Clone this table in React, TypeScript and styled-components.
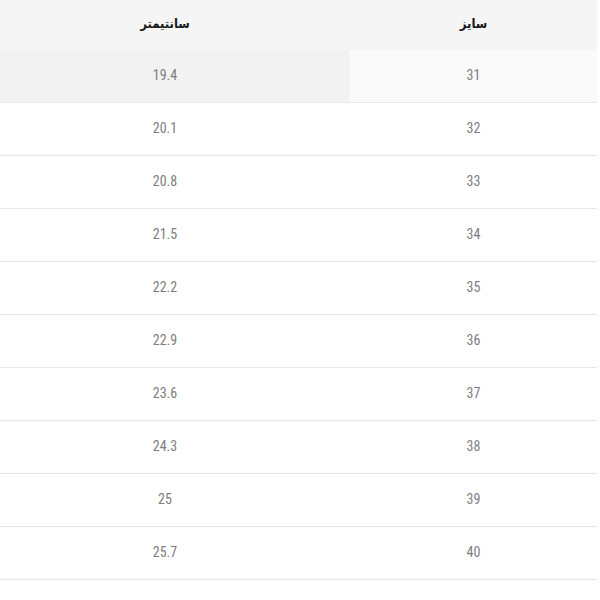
import React from "react";
import styled, { createGlobalStyle } from "styled-components";

const Global = createGlobalStyle`
  html, body { margin: 0; padding: 0; background: #ffffff; }
  body { width: 600px; height: 600px; overflow: hidden; }
`;

const Viewport = styled.div`
  width: 600px;
  height: 600px;
  overflow: hidden;
  background: #ffffff;
`;

const Table = styled.div`
  direction: rtl;
  width: 617px;
  margin-left: -20px;
  display: flex;
  flex-direction: column;
`;

const HeaderRow = styled.div`
  display: grid;
  grid-template-columns: 247px 1fr;
  height: 50px;
  background: #f5f5f5;
`;

const HeadCell = styled.div`
  display: flex;
  align-items: center;
  justify-content: center;
  font-family: "DejaVu Sans Condensed", "DejaVu Sans", sans-serif;
  font-weight: 700;
  font-size: 13px;
  color: #1a1a1a;
  padding-bottom: 3px;
`;

const Row = styled.div`
  display: grid;
  grid-template-columns: 247px 1fr;
  height: 52px;
  border-bottom: 1.5px solid #e6e6e6;
`;

const Cell = styled.div<{ $bg?: string }>`
  display: flex;
  align-items: center;
  justify-content: center;
  background: ${(p) => p.$bg || "transparent"};
  font-family: "Liberation Sans Narrow", "Roboto Condensed", Roboto, sans-serif;
  font-size: 14px;
  color: #7d7d7d;
  padding-bottom: 2px;
`;

const data: [string, string][] = [
  ["31", "19.4"],
  ["32", "20.1"],
  ["33", "20.8"],
  ["34", "21.5"],
  ["35", "22.2"],
  ["36", "22.9"],
  ["37", "23.6"],
  ["38", "24.3"],
  ["39", "25"],
  ["40", "25.7"],
];

export default function App() {
  return (
    <Viewport>
      <Global />
      <Table>
        <HeaderRow>
          <HeadCell>سایز</HeadCell>
          <HeadCell>سانتیمتر</HeadCell>
        </HeaderRow>
        {data.map(([size, cm], i) => (
          <Row key={size}>
            <Cell $bg={i === 0 ? "#fafafa" : undefined}>{size}</Cell>
            <Cell $bg={i === 0 ? "#f2f2f2" : undefined}>{cm}</Cell>
          </Row>
        ))}
      </Table>
    </Viewport>
  );
}
